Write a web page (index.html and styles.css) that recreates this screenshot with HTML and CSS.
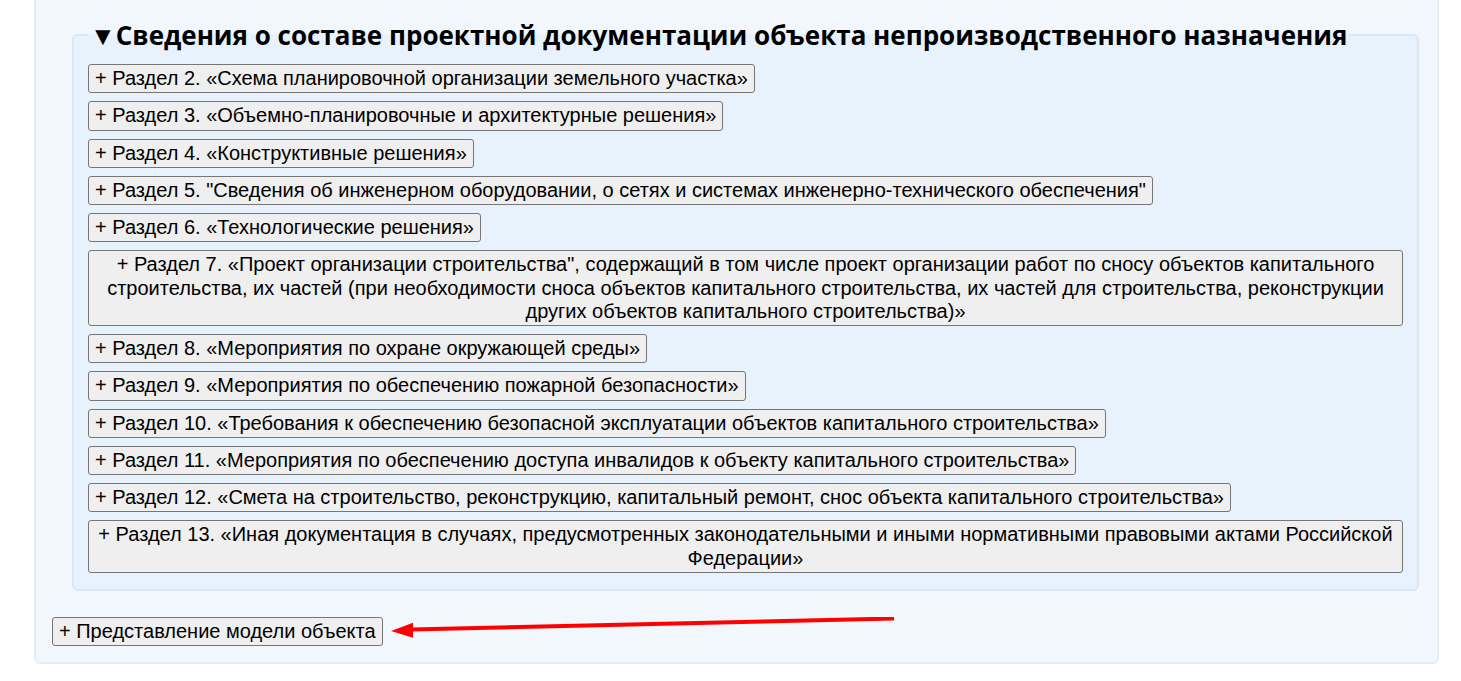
FILE: index.html
```html
<!DOCTYPE html>
<html lang="ru">

<head>
    <meta charset="UTF-8">
    <meta name="viewport" content="width=device-width, initial-scale=1.0">
    <title>Состав проектной документации</title>
    <link rel="stylesheet" href="styles.css">
</head>

<body>
    <div class="panel">
        <fieldset class="doc-group">
            <legend>▼Сведения о составе проектной документации объекта непроизводственного назначения</legend>
            <button class="doc-btn">+ Раздел 2. «Схема планировочной организации земельного участка»</button>
            <button class="doc-btn">+ Раздел 3. «Объемно-планировочные и архитектурные решения»</button>
            <button class="doc-btn">+ Раздел 4. «Конструктивные решения»</button>
            <button class="doc-btn">+ Раздел 5. "Сведения об инженерном оборудовании, о сетях и системах инженерно-технического обеспечения"</button>
            <button class="doc-btn">+ Раздел 6. «Технологические решения»</button>
            <button class="doc-btn">+ Раздел 7. «Проект организации строительства", содержащий в том числе проект организации работ по сносу объектов капитального строительства, их частей (при необходимости сноса объектов капитального строительства, их частей для строительства, реконструкции других объектов капитального строительства)»</button>
            <button class="doc-btn">+ Раздел 8. «Мероприятия по охране окружающей среды»</button>
            <button class="doc-btn">+ Раздел 9. «Мероприятия по обеспечению пожарной безопасности»</button>
            <button class="doc-btn">+ Раздел 10. «Требования к обеспечению безопасной эксплуатации объектов капитального строительства»</button>
            <button class="doc-btn">+ Раздел 11. «Мероприятия по обеспечению доступа инвалидов к объекту капитального строительства»</button>
            <button class="doc-btn">+ Раздел 12. «Смета на строительство, реконструкцию, капитальный ремонт, снос объекта капитального строительства»</button>
            <button class="doc-btn">+ Раздел 13. «Иная документация в случаях, предусмотренных законодательными и иными нормативными правовыми актами Российской Федерации»</button>
        </fieldset>

        <button class="doc-btn model-btn">+ Представление модели объекта</button>

        <!-- стрелка-подсказка поверх панели -->
        <svg class="pointer-arrow" width="520" height="30" viewBox="0 0 520 30">
            <line x1="20" y1="12.5" x2="503" y2="1.5" stroke="#ff0000" stroke-width="4" />
            <polygon points="0,14 22,5.7 22,20.7" fill="#ff0000" />
        </svg>
    </div>
</body>
</html>
```

FILE: styles.css
```css
body, html {
    margin: 0;
    padding: 0;
    background: #ffffff;
    font-family: "Liberation Sans", Arial, sans-serif;
    overflow: hidden;
}

.panel {
    position: relative;
    margin: -40px 22px 0 34px;
    padding: 60px 16px 16px 16px;
    background-color: #f2f7fe;
    border: 2px solid #e2edf9;
    border-top: none;
    border-radius: 0 0 6px 6px;
}

.doc-group {
    margin: 0 2px 26px 20px;
    padding: 14px 14px 16px 14px;
    background-color: #e8f2fd;
    border: 2px solid #d9e8f8;
    border-radius: 6px;
}

.doc-group legend {
    margin-left: 0;
    padding: 0 2px;
    font-family: "Open Sans", "Noto Sans", sans-serif;
    font-size: 26px;
    font-weight: bold;
    color: #000;
    line-height: 30px;
}

.doc-btn {
    display: block;
    margin: 0 0 8px 0;
    padding: 2px 6px;
    font-family: "Liberation Sans", Arial, sans-serif;
    font-size: 20px;
    line-height: 23.25px;
    color: #000;
    background-color: #efefef;
    border: 1px solid #767676;
    border-radius: 3px;
    text-align: center;
}

.doc-group .doc-btn:last-of-type {
    margin-bottom: 0;
}

.model-btn {
    margin: 0;
}

.pointer-arrow {
    position: absolute;
    left: 355px;
    bottom: 15px;
}
```
